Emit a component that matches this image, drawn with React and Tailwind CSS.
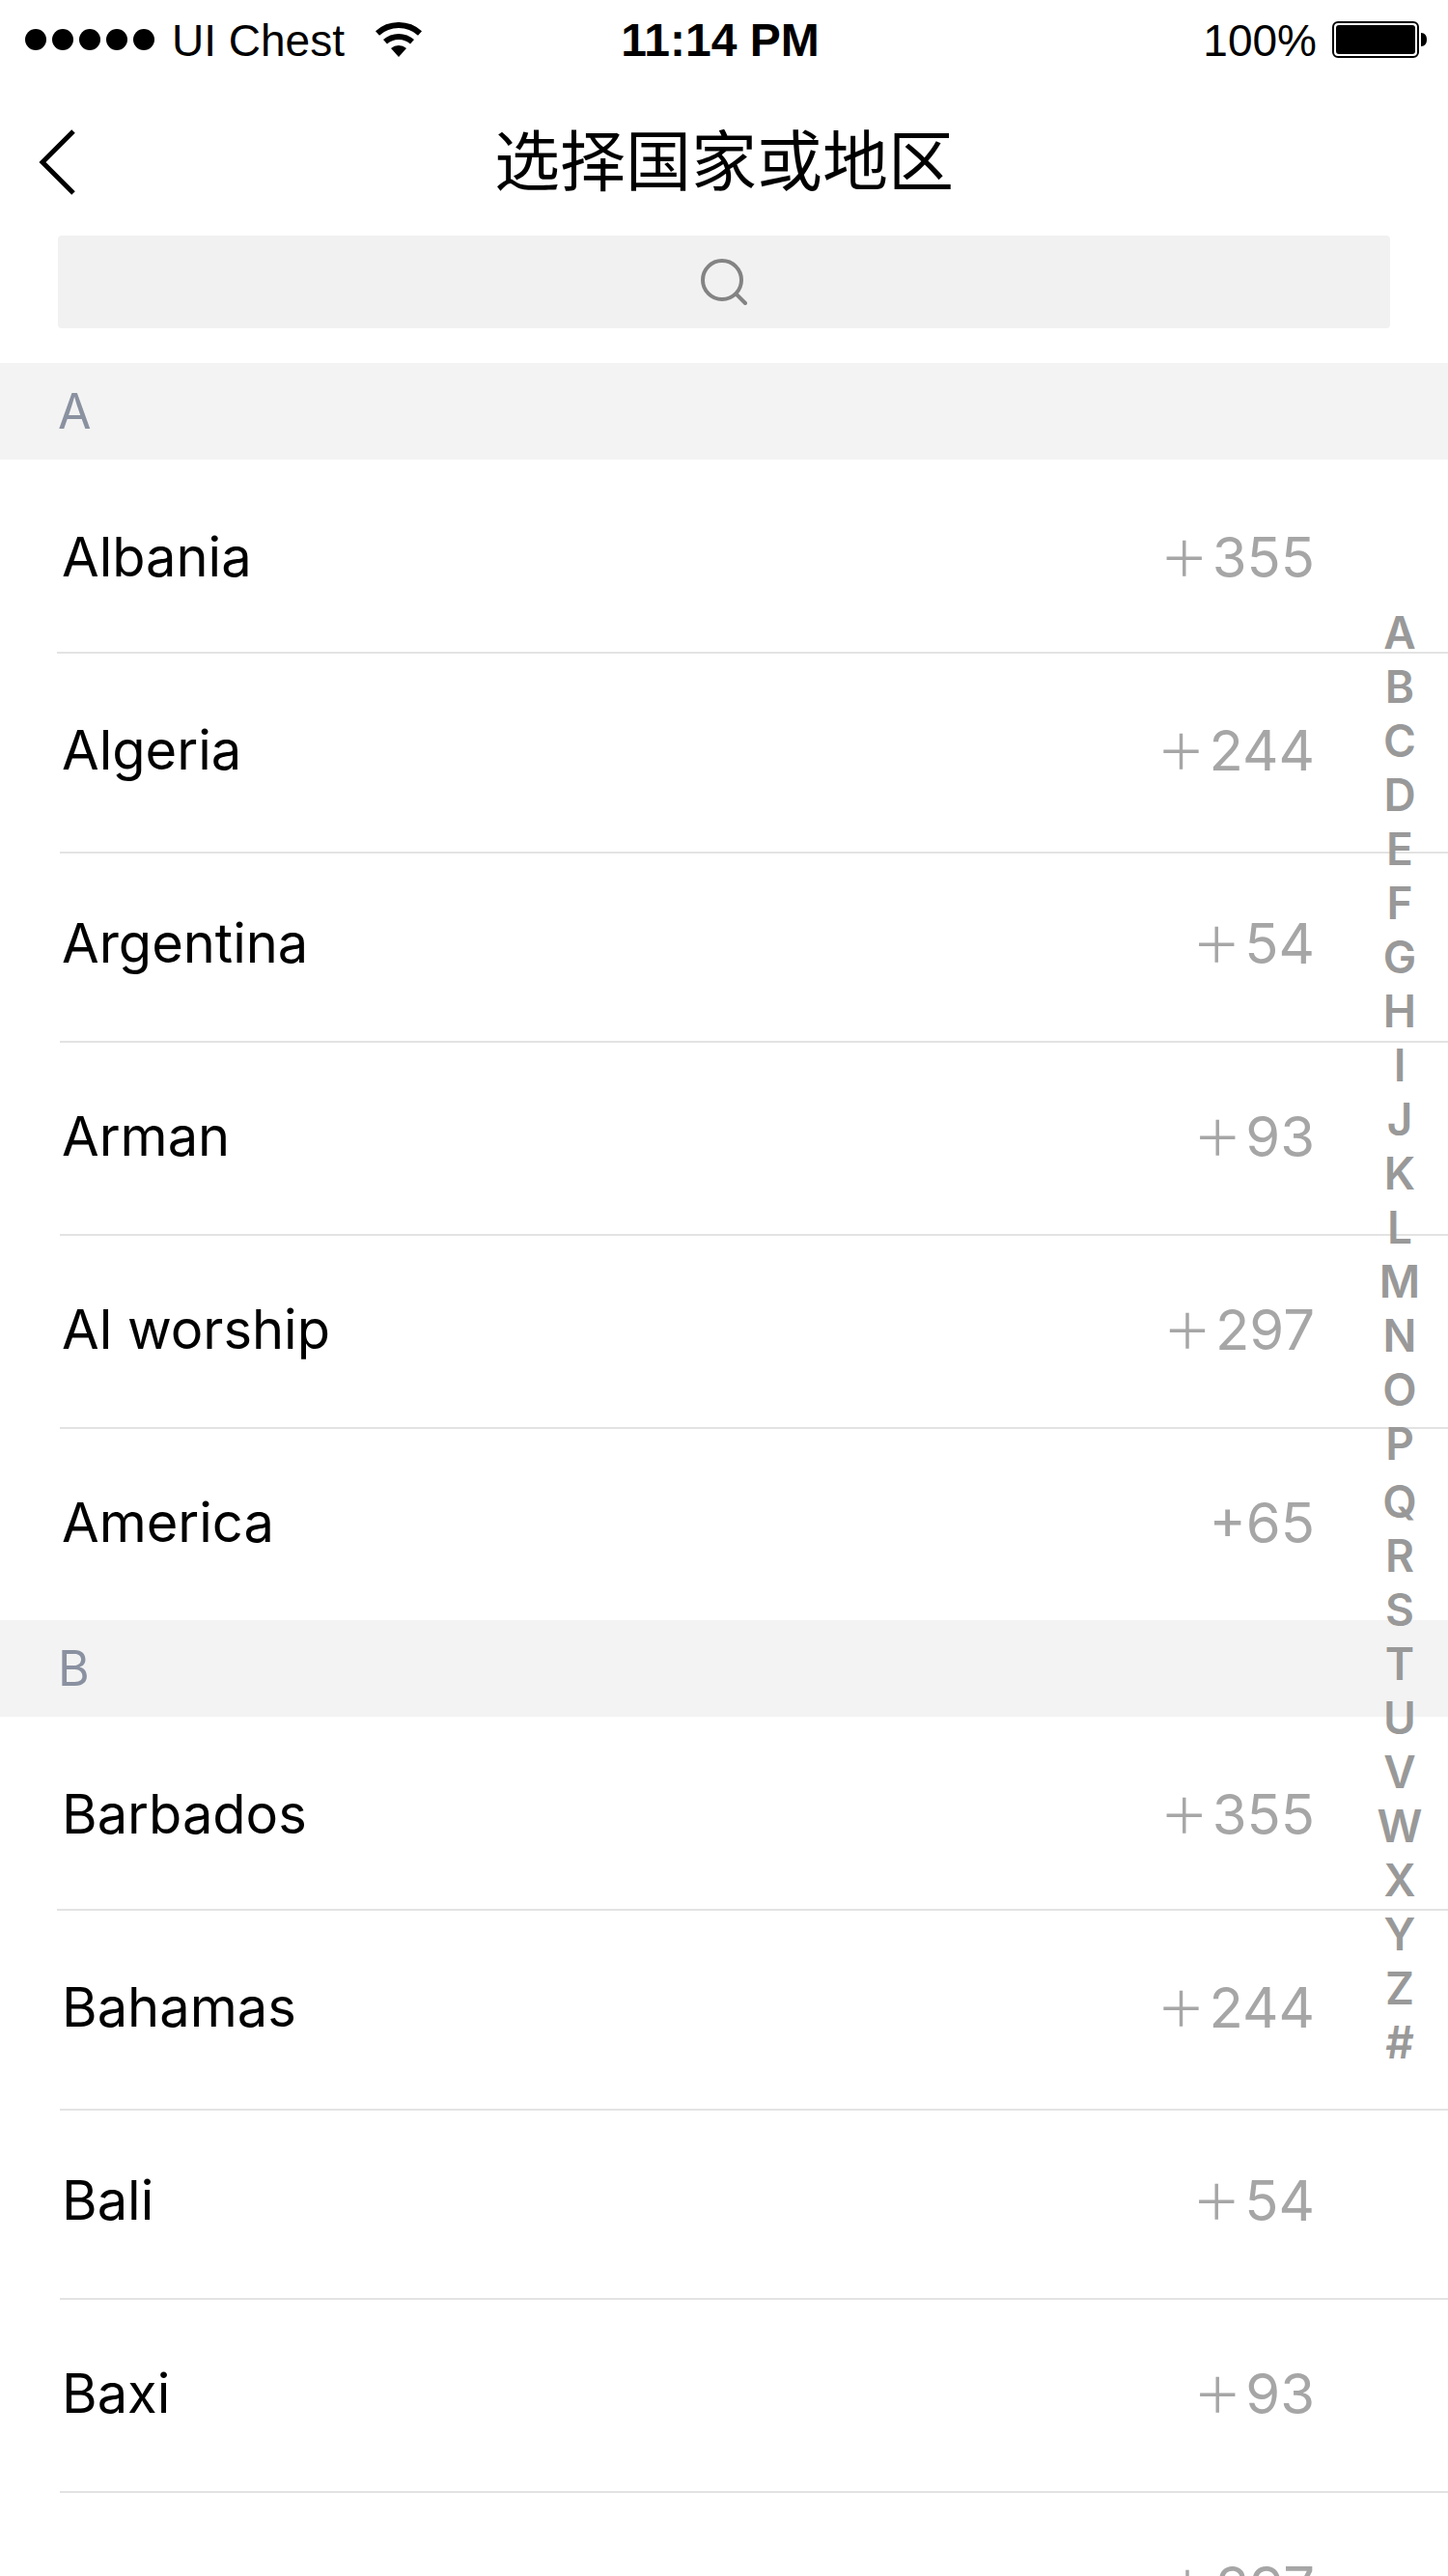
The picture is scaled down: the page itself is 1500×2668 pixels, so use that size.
const rowStyles = {
  first: "ml-[59px] pl-[5px] pt-[51px] pb-[48px] border-b-2",
  second: "ml-[62px] pl-[2px] pt-[50px] pb-[55px] border-b-2",
  third: "ml-[62px] pl-[2px] pt-[43px] pb-[51px] border-b-2",
  normal: "ml-[62px] pl-[2px] pt-[47px] pb-[51px] border-b-2",
  last: "ml-[62px] pl-[2px] pt-[47px] pb-[51px]",
};

const sections = [
  {
    letter: "A",
    rows: [
      { name: "Albania", code: "\uFF0B355", kind: "first" },
      { name: "Algeria", code: "\uFF0B244", kind: "second" },
      { name: "Argentina", code: "\uFF0B54", kind: "third" },
      { name: "Arman", code: "\uFF0B93", kind: "normal" },
      { name: "Al worship", code: "\uFF0B297", kind: "normal" },
      { name: "America", code: "+65", kind: "last" },
    ],
  },
  {
    letter: "B",
    rows: [
      { name: "Barbados", code: "\uFF0B355", kind: "first" },
      { name: "Bahamas", code: "\uFF0B244", kind: "second" },
      { name: "Bali", code: "\uFF0B54", kind: "third" },
      { name: "Baxi", code: "\uFF0B93", kind: "normal" },
      { name: "", code: "\uFF0B297", kind: "last" },
    ],
  },
];

const indexGroups = ["ABCDEFGHIJKLMNOP", "QRSTUVWXYZ#"];

function SignalDots() {
  return (
    <svg width="134" height="22" viewBox="0 0 134 22" aria-hidden="true">
      {[11, 39, 67, 95, 123].map((x) => (
        <circle key={x} cx={x} cy="11" r="11" />
      ))}
    </svg>
  );
}

function Wifi() {
  return (
    <svg width="48" height="36" viewBox="0 0 48 36" aria-hidden="true">
      <path d="M2 11.4A33 33 0 0 1 46 11.4M10 20.3A21 21 0 0 1 38 20.3" fill="none" stroke="#000" strokeWidth="6" />
      <path d="M24 36L16 27.1A12 12 0 0 1 32 27.1Z" />
    </svg>
  );
}

function Battery() {
  return (
    <svg width="98" height="38" viewBox="0 0 98 38" aria-hidden="true">
      <rect x="1" y="1" width="88" height="36" rx="5" fill="none" stroke="#000" strokeWidth="2" />
      <rect x="4" y="4" width="82" height="30" rx="3" />
      <path d="M92 12C96 12 98 15 98 19S96 26 92 26Z" />
    </svg>
  );
}

function StatusBar() {
  return (
    <div className="grid h-[82px] shrink-0 grid-cols-[1fr_auto_1fr] items-center pr-[22px] pl-[26px] font-['Liberation_Sans',sans-serif] text-[46px] leading-[52px]">
      <div className="flex items-center">
        <SignalDots />
        <span className="ml-[18px] pt-[2px]">UI Chest</span>
        <span className="ml-8">
          <Wifi />
        </span>
      </div>
      <time className="pt-[2px] pr-3 text-[48px] font-bold">11:14 PM</time>
      <div className="flex items-center justify-end gap-4">
        <span className="pt-[2px]">100%</span>
        <Battery />
      </div>
    </div>
  );
}

function CountryRow({ name, code, kind }) {
  const wide = code.startsWith("\uFF0B");
  return (
    <li className={`${rowStyles[kind]} border-[#e3e3e4]`}>
      <button type="button" className="flex h-[100px] w-full items-center justify-between pr-[138px] text-left text-[56px] leading-[100px]">
        <span>{name}</span>
        <span className="flex items-center gap-1 text-[58px] text-[#a6a6a6]">
          {wide && <span className="pb-1 font-['Noto_Sans_CJK_SC',sans-serif] text-[50px]">{"\uFF0B"}</span>}
          <span>{wide ? code.slice(1) : code}</span>
        </span>
      </button>
    </li>
  );
}

export default function App() {
  return (
    <div className="relative flex h-screen flex-col overflow-hidden bg-white font-[Inter,'Noto_Sans_CJK_SC',sans-serif] text-black">
      <StatusBar />
      <header className="grid h-[162px] shrink-0 grid-cols-[1fr_auto_1fr] items-center">
        <button type="button" aria-label="返回" className="w-fit pl-10">
          <svg width="40" height="80" viewBox="0 0 40 80" fill="none" stroke="#000" strokeWidth="5" aria-hidden="true">
            <path d="M36 13L4 45L36 77" />
          </svg>
        </button>
        <h1 className="font-['Noto_Sans_CJK_SC',sans-serif] text-[68px] leading-[100px] font-normal">选择国家或地区</h1>
      </header>
      <label className="relative mx-[60px] mb-9 block h-24 shrink-0">
        <input type="text" aria-label="搜索" className="block h-full w-full rounded bg-[#f1f1f1] px-6 text-center text-[46px] outline-none" />
        <span className="pointer-events-none absolute inset-0 flex items-center justify-center">
          <svg width="48" height="48" viewBox="0 0 48 48" fill="none" stroke="#838383" strokeWidth="4" strokeLinecap="round" aria-hidden="true">
            <circle cx="22" cy="22" r="20" />
            <path d="M36.500 36.500L46 46" />
          </svg>
        </span>
      </label>
      <main className="min-h-0 flex-1 overflow-hidden">
        {sections.map((section) => (
          <section key={section.letter} id={`section-${section.letter}`}>
            <h2 className="h-[100px] bg-[#f3f3f3] pl-[60px] text-[50px] leading-[100px] font-normal text-[#8a91a0]">{section.letter}</h2>
            <ul>
              {section.rows.map((row) => (
                <CountryRow key={row.name + row.code} {...row} />
              ))}
            </ul>
          </section>
        ))}
      </main>
      <nav aria-label="索引" className="absolute top-[627px] right-0 flex w-[100px] flex-col gap-1 text-center text-[46px] leading-[56px] font-semibold text-[#999]">
        {indexGroups.map((group) => (
          <ul key={group}>
            {group.split("").map((letter) => (
              <li key={letter}>
                <a href={`#section-${letter}`} className="block">{letter}</a>
              </li>
            ))}
          </ul>
        ))}
      </nav>
    </div>
  );
}
